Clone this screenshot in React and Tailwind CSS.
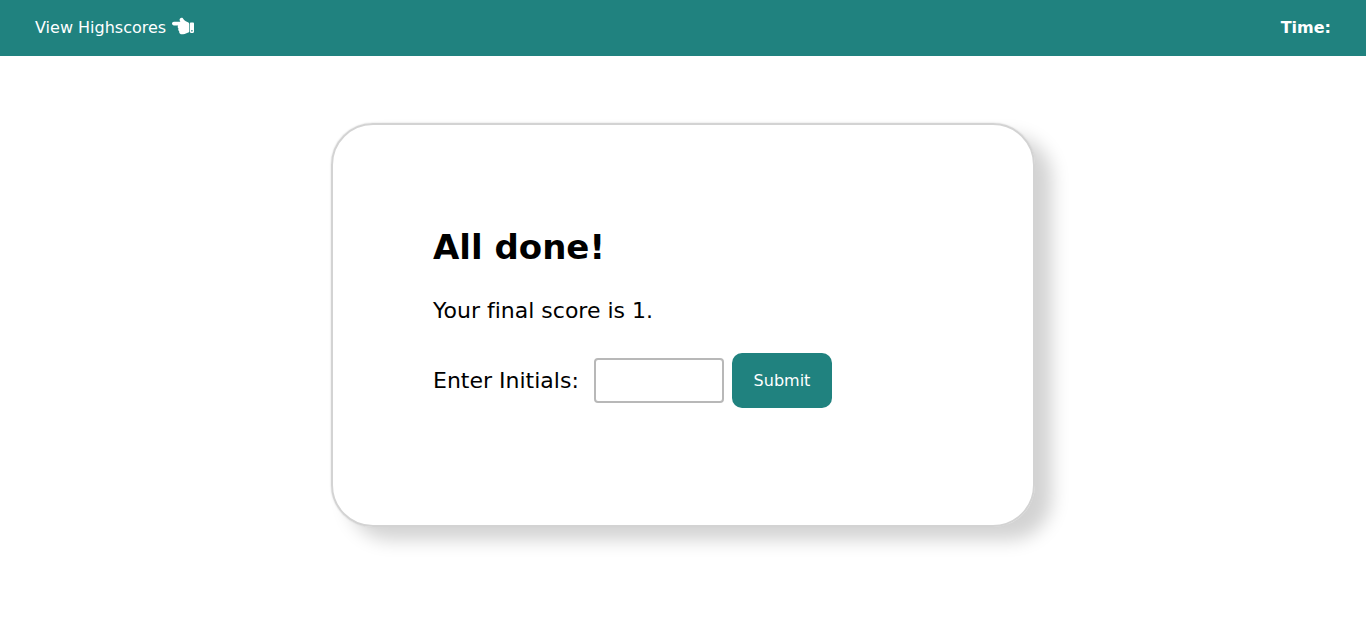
import { useState } from "react";
import { FaHandPointLeft } from "react-icons/fa";

const Header = () => {
  return (
    <header className="flex h-14 items-center justify-between bg-[#20827f] px-[35px] text-base text-white">
      <a href="#highscores" className="flex items-center gap-1.5">
        View Highscores
        <FaHandPointLeft className="mb-1 size-[22px]" aria-hidden="true" />
      </a>
      <div className="font-bold">Time:</div>
    </header>
  );
};

const ScoreForm = ({ score }) => {
  const [initials, setInitials] = useState("");

  return (
    <form
      className="text-[22px] leading-8"
      onSubmit={(event) => event.preventDefault()}
    >
      <h1 className="text-[34px] leading-10 font-bold">All done!</h1>
      <p className="mt-7">Your final score is {score}.</p>
      <div className="mt-[26px] flex items-center">
        <label htmlFor="initials" className="w-[161px] whitespace-nowrap">
          Enter Initials:
        </label>
        <input
          id="initials"
          type="text"
          value={initials}
          onChange={(event) => setInitials(event.target.value)}
          className="h-[45px] w-[130px] rounded border-2 border-[#b8b8b8] px-2"
        />
        <button
          type="submit"
          className="ml-2 h-[55px] w-[100px] cursor-pointer rounded-[10px] bg-[#20827f] text-base text-white"
        >
          Submit
        </button>
      </div>
    </form>
  );
};

const App = () => {
  return (
    <div className="font-['Verdana','DejaVu_Sans',sans-serif] text-black [font-variant-ligatures:none]">
      <Header />
      <main className="px-4 pt-[67px] pb-16">
        <section className="mx-auto max-w-[704px] rounded-[42px] border-2 border-[#d3d3d3] px-[100px] pt-[102px] pb-[117px] shadow-[0_0_2px_#d3d3d3,17px_13px_18px_#d3d3d3]">
          <ScoreForm score={1} />
        </section>
      </main>
    </div>
  );
};

export default App;
